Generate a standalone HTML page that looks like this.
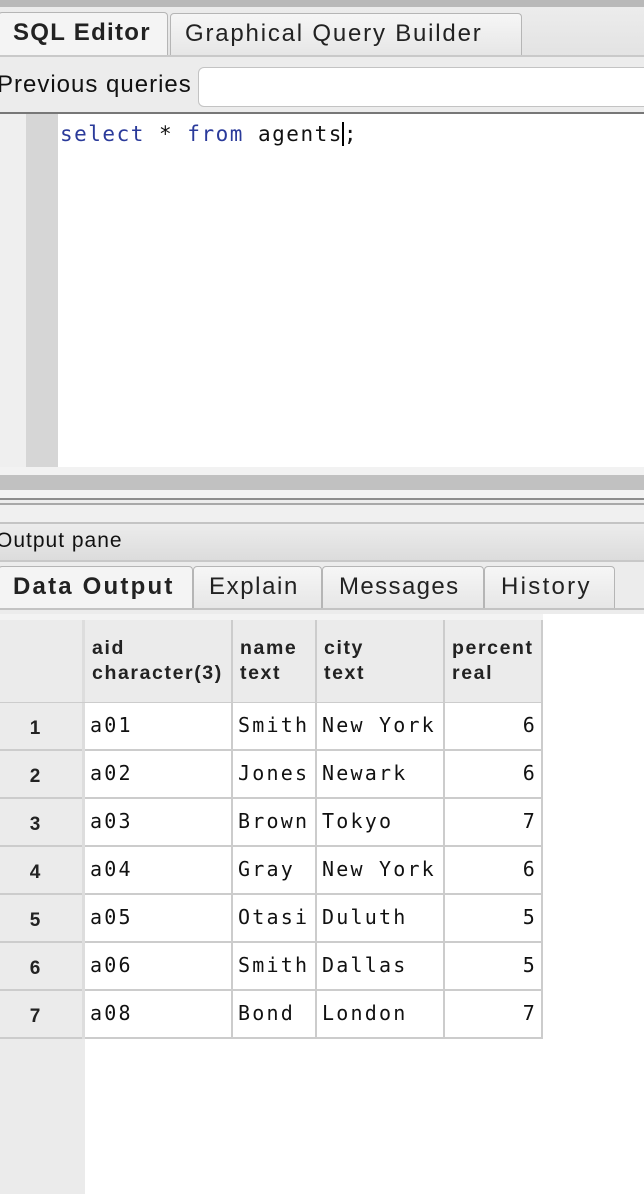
<!DOCTYPE html>
<html><head><meta charset="utf-8"><style>
*{margin:0;padding:0;box-sizing:border-box}
body{width:644px;height:1194px;position:relative;overflow:hidden;background:#ececec;font-family:"Liberation Sans","DejaVu Sans",sans-serif;color:#111}
.a{position:absolute}
.tab{position:absolute;border:1px solid #b5b5b5;border-bottom:none;border-radius:4px 4px 0 0;background:linear-gradient(#f6f6f6,#e6e6e6);font-size:24px;padding-left:14px;line-height:40px;color:#222;white-space:nowrap}
.mono{font-family:"DejaVu Sans Mono","Liberation Mono",monospace;font-size:20px;letter-spacing:2.2px}
.hd{position:absolute;background:#ebebeb;border-right:2px solid #ccc;font-weight:bold;font-size:19.5px;letter-spacing:1.6px;line-height:25px;padding:16px 0 0 7px;color:#222;top:620px;height:83px;white-space:nowrap}
.cell{position:absolute;height:48px;border-right:2px solid #ccc;border-bottom:2px solid #ccc;background:#fff;line-height:44px;padding-left:5px;color:#111}
.rn{position:absolute;left:0;width:82px;height:48px;background:#ebebeb;border-bottom:2px solid #ccc;text-align:center;padding-right:12px;font-weight:bold;font-size:19px;line-height:52px;color:#222}
</style></head><body>
<div class="a" style="left:0;top:0;width:644px;height:7px;background:#b9b9b9"></div>
<div class="a" style="left:0;top:7px;width:644px;height:50px;background:linear-gradient(#ececec,#e3e3e3)"></div>
<div class="tab" style="left:-2px;top:12px;width:170px;height:44px;background:#f4f4f4;font-weight:bold;padding-left:14px;letter-spacing:1.3px">SQL Editor</div>
<div class="tab" style="left:170px;top:13px;width:352px;height:43px;letter-spacing:1.8px">Graphical Query Builder</div>
<div class="a" style="left:0;top:55px;width:644px;height:2px;background:#c9c9c9"></div>
<div class="a" style="left:0;top:57px;width:644px;height:55px;background:#ececec"></div>
<div class="a" style="left:-3px;top:71px;font-size:24px;color:#111;letter-spacing:1px">Previous queries</div>
<div class="a" style="left:198px;top:67px;width:460px;height:40px;background:#fff;border:1px solid #c3c3c3;border-radius:6px"></div>
<div class="a" style="left:0;top:112px;width:644px;height:2px;background:#777"></div>
<div class="a" style="left:0;top:114px;width:644px;height:353px;background:#fff"></div>
<div class="a" style="left:0;top:114px;width:26px;height:353px;background:#efefef"></div>
<div class="a" style="left:26px;top:114px;width:32px;height:353px;background:#d6d6d6"></div>
<div class="a mono" style="left:60px;top:120px;font-size:21px;letter-spacing:1.5px;line-height:28px;color:#111"><span style="color:#2a3a9a">select</span> * <span style="color:#2a3a9a">from</span> agents<span style="border-left:2px solid #000;margin-left:-1px"></span>;</div>
<div class="a" style="left:0;top:467px;width:644px;height:8px;background:#f2f2f2"></div>
<div class="a" style="left:0;top:475px;width:644px;height:15px;background:#c1c1c1"></div>
<div class="a" style="left:0;top:490px;width:644px;height:8px;background:#f2f2f2"></div>
<div class="a" style="left:0;top:498px;width:644px;height:2px;background:#8c8c8c"></div>
<div class="a" style="left:0;top:503px;width:644px;height:2px;background:#a8a8a8"></div>
<div class="a" style="left:0;top:505px;width:644px;height:17px;background:#f0f0f0"></div>
<div class="a" style="left:0;top:522px;width:644px;height:2px;background:#c4c4c4"></div>
<div class="a" style="left:0;top:524px;width:644px;height:36px;background:linear-gradient(#ececec,#dcdcdc);font-size:21px;line-height:34px;letter-spacing:1px"><span style="margin-left:-4px">Output pane</span></div>
<div class="a" style="left:0;top:560px;width:644px;height:2px;background:#c8c8c8"></div>
<div class="tab" style="left:-2px;top:566px;width:195px;height:43px;background:#f4f4f4;font-weight:bold;letter-spacing:2.2px">Data Output</div>
<div class="tab" style="left:193px;top:566px;width:129px;height:43px;padding-left:15px;letter-spacing:1.6px">Explain</div>
<div class="tab" style="left:322px;top:566px;width:162px;height:43px;padding-left:16px;letter-spacing:1.4px">Messages</div>
<div class="tab" style="left:484px;top:566px;width:131px;height:43px;padding-left:16px;letter-spacing:2.3px">History</div>
<div class="a" style="left:0;top:608px;width:644px;height:2px;background:#c3c3c3"></div>
<div class="a" style="left:0;top:614px;width:644px;height:580px;background:#fff"></div>
<div class="a" style="left:0;top:614px;width:85px;height:580px;background:#ebebeb"></div>
<div class="a" style="left:0;top:614px;width:543px;height:6px;background:#f3f3f3"></div>
<div class="hd" style="left:0;width:85px;border-right:3px solid #ddd"></div>
<div class="hd" style="left:85px;width:148px">aid<br>character(3)</div>
<div class="hd" style="left:233px;width:84px">name<br>text</div>
<div class="hd" style="left:317px;width:128px">city<br>text</div>
<div class="hd" style="left:445px;width:98px">percent<br>real</div>
<div class="a" style="left:0;top:702px;width:543px;height:2px;background:#ccc"></div>

<div class="rn" style="top:703px">1</div><div class="cell mono" style="left:85px;top:703px;width:148px">a01</div><div class="cell mono" style="left:233px;top:703px;width:84px">Smith</div><div class="cell mono" style="left:317px;top:703px;width:128px">New York</div><div class="cell mono" style="left:445px;top:703px;width:98px;text-align:right;padding-right:4px">6</div>
<div class="rn" style="top:751px">2</div><div class="cell mono" style="left:85px;top:751px;width:148px">a02</div><div class="cell mono" style="left:233px;top:751px;width:84px">Jones</div><div class="cell mono" style="left:317px;top:751px;width:128px">Newark</div><div class="cell mono" style="left:445px;top:751px;width:98px;text-align:right;padding-right:4px">6</div>
<div class="rn" style="top:799px">3</div><div class="cell mono" style="left:85px;top:799px;width:148px">a03</div><div class="cell mono" style="left:233px;top:799px;width:84px">Brown</div><div class="cell mono" style="left:317px;top:799px;width:128px">Tokyo</div><div class="cell mono" style="left:445px;top:799px;width:98px;text-align:right;padding-right:4px">7</div>
<div class="rn" style="top:847px">4</div><div class="cell mono" style="left:85px;top:847px;width:148px">a04</div><div class="cell mono" style="left:233px;top:847px;width:84px">Gray</div><div class="cell mono" style="left:317px;top:847px;width:128px">New York</div><div class="cell mono" style="left:445px;top:847px;width:98px;text-align:right;padding-right:4px">6</div>
<div class="rn" style="top:895px">5</div><div class="cell mono" style="left:85px;top:895px;width:148px">a05</div><div class="cell mono" style="left:233px;top:895px;width:84px">Otasi</div><div class="cell mono" style="left:317px;top:895px;width:128px">Duluth</div><div class="cell mono" style="left:445px;top:895px;width:98px;text-align:right;padding-right:4px">5</div>
<div class="rn" style="top:943px">6</div><div class="cell mono" style="left:85px;top:943px;width:148px">a06</div><div class="cell mono" style="left:233px;top:943px;width:84px">Smith</div><div class="cell mono" style="left:317px;top:943px;width:128px">Dallas</div><div class="cell mono" style="left:445px;top:943px;width:98px;text-align:right;padding-right:4px">5</div>
<div class="rn" style="top:991px">7</div><div class="cell mono" style="left:85px;top:991px;width:148px">a08</div><div class="cell mono" style="left:233px;top:991px;width:84px">Bond</div><div class="cell mono" style="left:317px;top:991px;width:128px">London</div><div class="cell mono" style="left:445px;top:991px;width:98px;text-align:right;padding-right:4px">7</div>
<div class="a" style="left:82px;top:703px;width:3px;height:336px;background:#ddd"></div>
</body></html>
